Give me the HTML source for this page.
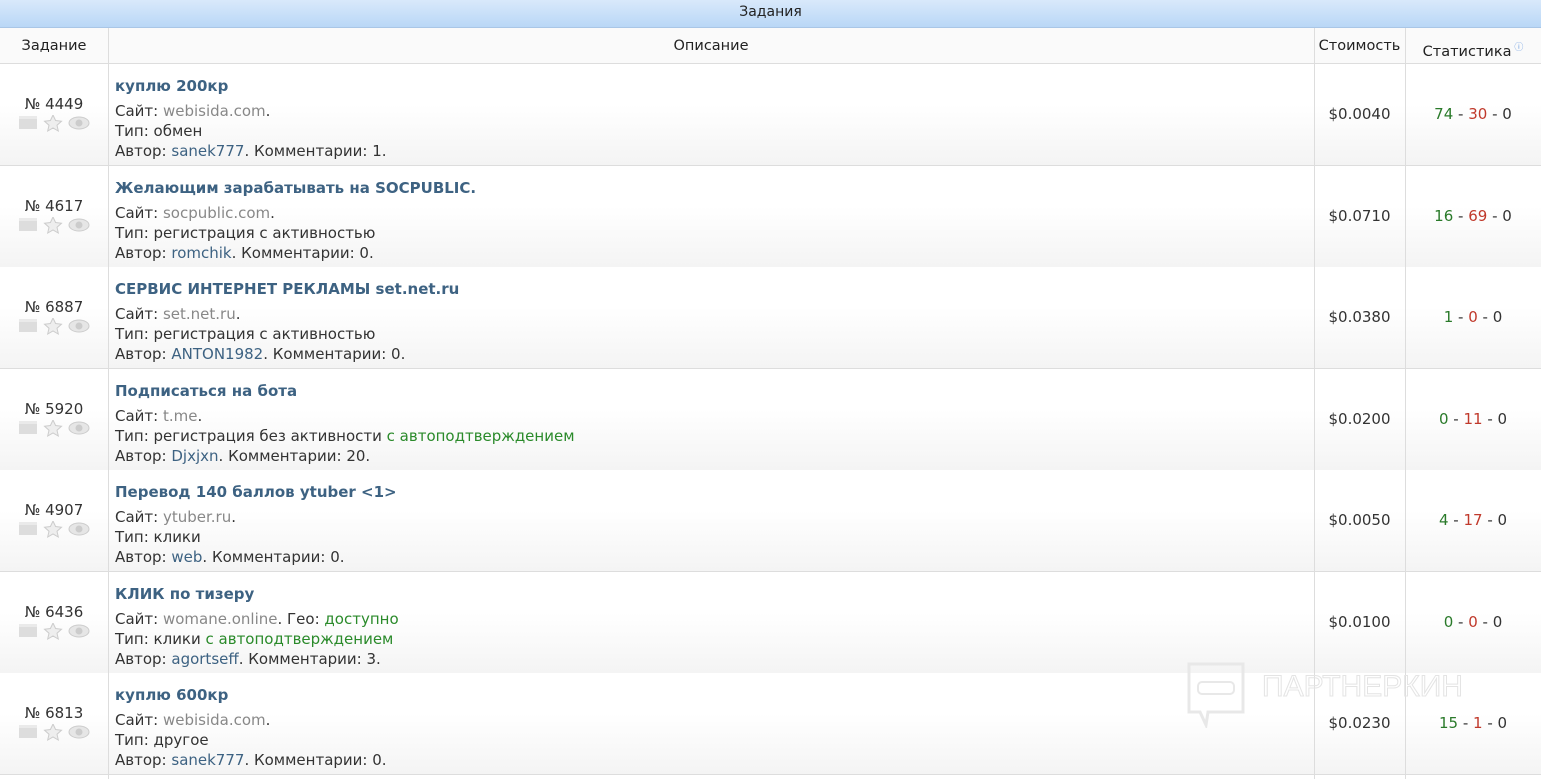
<!DOCTYPE html>
<html><head><meta charset="utf-8"><style>
*{margin:0;padding:0;box-sizing:border-box}
html,body{width:1541px;height:779px;overflow:hidden}
body{background:#fff;font-family:"DejaVu Sans","Liberation Sans",sans-serif;font-size:15px;color:#333;position:relative}
.top{position:absolute;left:0;top:0;width:1541px;height:28px;background:linear-gradient(#d9e9fb,#b9d7f6);border-bottom:1px solid #a9c6e6;text-align:center;line-height:25px;font-size:14px;color:#222}
.hd{position:absolute;top:28px;height:36px;line-height:36px;text-align:center;font-size:14.5px;color:#222;background:#fafafa;border-bottom:1px solid #ddd}
.row{position:absolute;left:0;width:1541px;height:102px;background:linear-gradient(#fff 40%,#f4f4f4);border-bottom:1px solid #ddd}
.vl{position:absolute;top:28px;height:751px;width:1px;background:#ddd}
.num{position:absolute;left:0;width:108px;top:31px;text-align:center;font-size:15px;color:#333}
.ic{position:absolute;top:51px;left:19px}
.d{position:absolute;left:115px;line-height:20px;white-space:nowrap}
.t{top:12px;font-weight:bold;color:#3d6282;font-size:15px}
.l1{top:37px}.l2{top:57px}.l3{top:77px}
.g{color:#888}.a{color:#3d6282}.gr{color:#2a8a2a}
.p{position:absolute;left:1314px;width:91px;top:41px;text-align:center}
.s{position:absolute;left:1405px;width:136px;top:41px;text-align:center}
.s .x{color:#2a7a2a}.s .y{color:#c0392b}
</style></head><body>
<div class="top">Задания</div>
<div class="hd" style="left:0;width:1541px"></div>
<div class="hd" style="left:0;width:108px">Задание</div>
<div class="hd" style="left:108px;width:1206px">Описание</div>
<div class="hd" style="left:1314px;width:91px">Стоимость</div>
<div class="hd" style="left:1405px;width:136px;padding-top:2px">Статистика<sup style="color:#6a9be0;font-size:9px"> ⓘ</sup></div>

<svg width="0" height="0" style="position:absolute"><defs>
<g id="icons">
<rect x="0" y="3" width="18" height="11" fill="#ddd"/><rect x="0" y="1" width="18" height="3" fill="#eaeaea"/>
<path d="M34 0 L36.6 5.5 L42.5 6.2 L38 10.2 L39.3 16 L34 13 L28.7 16 L30 10.2 L25.5 6.2 L31.4 5.5Z" fill="#eee" stroke="#ccc"/>
<ellipse cx="60" cy="8" rx="10" ry="6" fill="#e6e6e6" stroke="#ccc"/><circle cx="60" cy="8" r="3.5" fill="#ccc"/>
</g></defs></svg>

<div class="row" style="top:64px"><div class="num">№ 4449</div><svg class="ic" width="72" height="18"><use href="#icons"/></svg>
<div class="d t">куплю 200кр</div><div class="d l1">Сайт: <span class="g">webisida.com</span>.</div><div class="d l2">Тип: обмен</div><div class="d l3">Автор: <span class="a">sanek777</span>. Комментарии: 1.</div>
<div class="p">$0.0040</div><div class="s"><span class="x">74</span> - <span class="y">30</span> - 0</div></div>

<div class="row" style="top:166px"><div class="num">№ 4617</div><svg class="ic" width="72" height="18"><use href="#icons"/></svg>
<div class="d t">Желающим зарабатывать на SOCPUBLIC.</div><div class="d l1">Сайт: <span class="g">socpublic.com</span>.</div><div class="d l2">Тип: регистрация с активностью</div><div class="d l3">Автор: <span class="a">romchik</span>. Комментарии: 0.</div>
<div class="p">$0.0710</div><div class="s"><span class="x">16</span> - <span class="y">69</span> - 0</div></div>

<div class="row" style="top:267px"><div class="num">№ 6887</div><svg class="ic" width="72" height="18"><use href="#icons"/></svg>
<div class="d t">СЕРВИС ИНТЕРНЕТ РЕКЛАМЫ set.net.ru</div><div class="d l1">Сайт: <span class="g">set.net.ru</span>.</div><div class="d l2">Тип: регистрация с активностью</div><div class="d l3">Автор: <span class="a">ANTON1982</span>. Комментарии: 0.</div>
<div class="p">$0.0380</div><div class="s"><span class="x">1</span> - <span class="y">0</span> - 0</div></div>

<div class="row" style="top:369px"><div class="num">№ 5920</div><svg class="ic" width="72" height="18"><use href="#icons"/></svg>
<div class="d t">Подписаться на бота</div><div class="d l1">Сайт: <span class="g">t.me</span>.</div><div class="d l2">Тип: регистрация без активности <span class="gr">с автоподтверждением</span></div><div class="d l3">Автор: <span class="a">Djxjxn</span>. Комментарии: 20.</div>
<div class="p">$0.0200</div><div class="s"><span class="x">0</span> - <span class="y">11</span> - 0</div></div>

<div class="row" style="top:470px"><div class="num">№ 4907</div><svg class="ic" width="72" height="18"><use href="#icons"/></svg>
<div class="d t">Перевод 140 баллов ytuber &lt;1&gt;</div><div class="d l1">Сайт: <span class="g">ytuber.ru</span>.</div><div class="d l2">Тип: клики</div><div class="d l3">Автор: <span class="a">web</span>. Комментарии: 0.</div>
<div class="p">$0.0050</div><div class="s"><span class="x">4</span> - <span class="y">17</span> - 0</div></div>

<div class="row" style="top:572px"><div class="num">№ 6436</div><svg class="ic" width="72" height="18"><use href="#icons"/></svg>
<div class="d t">КЛИК по тизеру</div><div class="d l1">Сайт: <span class="g">womane.online</span>. Гео: <span class="gr">доступно</span></div><div class="d l2">Тип: клики <span class="gr">с автоподтверждением</span></div><div class="d l3">Автор: <span class="a">agortseff</span>. Комментарии: 3.</div>
<div class="p">$0.0100</div><div class="s"><span class="x">0</span> - <span class="y">0</span> - 0</div></div>

<div class="row" style="top:673px"><div class="num">№ 6813</div><svg class="ic" width="72" height="18"><use href="#icons"/></svg>
<div class="d t">куплю 600кр</div><div class="d l1">Сайт: <span class="g">webisida.com</span>.</div><div class="d l2">Тип: другое</div><div class="d l3">Автор: <span class="a">sanek777</span>. Комментарии: 0.</div>
<div class="p">$0.0230</div><div class="s"><span class="x">15</span> - <span class="y">1</span> - 0</div></div>

<div class="vl" style="left:108px"></div>
<div class="vl" style="left:1314px"></div>
<div class="vl" style="left:1405px"></div>

<svg style="position:absolute;left:1186px;top:662px" width="310" height="66">
<path d="M3 2 H57 V50 H22 L20 63 L14 50 H3Z" fill="none" stroke="#e8e8e8" stroke-width="3"/>
<rect x="12" y="20" width="36" height="12" rx="4" fill="none" stroke="#e8e8e8" stroke-width="2"/>
<text x="76" y="34" font-family="Liberation Sans,sans-serif" font-size="30" fill="none" stroke="#e4e4e4" stroke-width="1">ПАРТНЕРКИН</text>
</svg>
</body></html>
